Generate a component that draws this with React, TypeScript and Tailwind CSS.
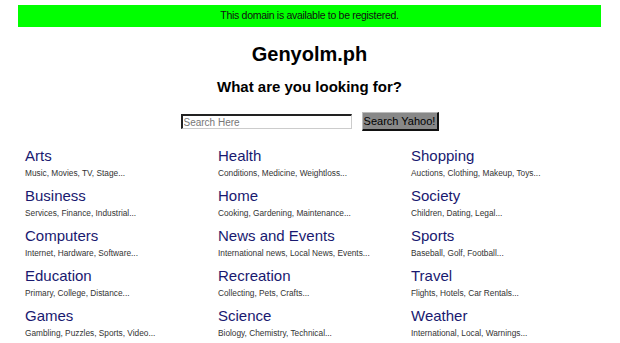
const categories = [
  { title: 'Arts', sub: 'Music, Movies, TV, Stage...' },
  { title: 'Health', sub: 'Conditions, Medicine, Weightloss...' },
  { title: 'Shopping', sub: 'Auctions, Clothing, Makeup, Toys...' },
  { title: 'Business', sub: 'Services, Finance, Industrial...' },
  { title: 'Home', sub: 'Cooking, Gardening, Maintenance...' },
  { title: 'Society', sub: 'Children, Dating, Legal...' },
  { title: 'Computers', sub: 'Internet, Hardware, Software...' },
  { title: 'News and Events', sub: 'International news, Local News, Events...' },
  { title: 'Sports', sub: 'Baseball, Golf, Football...' },
  { title: 'Education', sub: 'Primary, College, Distance...' },
  { title: 'Recreation', sub: 'Collecting, Pets, Crafts...' },
  { title: 'Travel', sub: 'Flights, Hotels, Car Rentals...' },
  { title: 'Games', sub: 'Gambling, Puzzles, Sports, Video...' },
  { title: 'Science', sub: 'Biology, Chemistry, Technical...' },
  { title: 'Weather', sub: 'International, Local, Warnings...' },
];

export default function App() {
  return (
    <div className="min-h-[343px] bg-white pt-[5px] pl-[18px] pr-[19px] font-['Liberation_Sans',Arial,sans-serif] text-black">
      {/* Banner */}
      <div className="h-[22px] bg-[#00ff00] flex items-center justify-center text-[10.5px] tracking-[-0.3px] text-[#111]">
        This domain is available to be registered.
      </div>

      {/* Heading */}
      <h1 className="mt-[16px] text-center text-[20px] leading-[23px] font-bold">Genyolm.ph</h1>
      <h2 className="mt-[12px] text-center text-[15px] leading-[17px] font-bold">What are you looking for?</h2>

      {/* Search */}
      <div className="mt-[17px] flex items-center justify-center gap-[10px]">
        <input
          type="text"
          placeholder="Search Here"
          className="w-[171px] h-[15px] bg-white border-t-2 border-l-2 border-b border-r border-t-[#222] border-l-[#222] border-b-[#ccc] border-r-[#ccc] px-[1px] text-[10px] placeholder:text-[#777] outline-none"
        />
        <button className="w-[77px] h-[19px] bg-[#888] border-t border-l border-b-2 border-r-2 border-t-[#bbb] border-l-[#bbb] border-b-[#111] border-r-[#111] text-[11px] leading-none text-black">
          Search Yahoo!
        </button>
      </div>

      {/* Directory */}
      <div className="mt-[16px] ml-[7px] grid grid-cols-[193px_193px_193px] gap-y-[9px]">
        {categories.map((c) => (
          <div key={c.title} className="flex flex-col">
            <a href="#" className="text-[15px] leading-[17px] text-[#191970]">
              {c.title}
            </a>
            <span className="mt-[4px] text-[8.3px] leading-[10px] text-[#333]">{c.sub}</span>
          </div>
        ))}
      </div>
    </div>
  );
}
